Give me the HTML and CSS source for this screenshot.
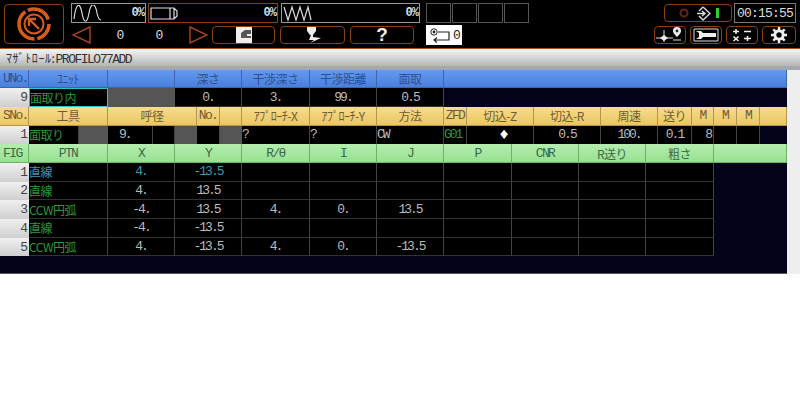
FILE: index.html
```html
<!DOCTYPE html>
<html lang="en">
<head>
    <meta charset="UTF-8">
    <title>PROFILO77ADD</title>
    <link rel="stylesheet" href="styles.css">
</head>
<body>
    <div class="topbar">
        <div class="home-btn">
            <svg width="36" height="36" viewBox="0 0 36 36">
                <circle cx="18" cy="18" r="15" fill="none" stroke="#d85c1c" stroke-width="3.5" stroke-dasharray="20 3 38 3 25 5"/>
                <circle cx="18" cy="18" r="9.5" fill="none" stroke="#d85c1c" stroke-width="2"/>
                <path d="M23 23 L13.5 13.5 M13 20 V13 H20" fill="none" stroke="#d85c1c" stroke-width="2.4"/>
            </svg>
        </div>
        <div class="panels">
            <div class="panel-row">
                <div class="gauge gauge-load">
                    <svg width="30" height="17" viewBox="0 0 30 17"><path d="M1 14 C3 -3 7 -3 9 8 C11 19 14 19 16 8 C18 -3 22 -3 24 8 C25 13 26 15 28 15" fill="none" stroke="#ddd" stroke-width="1.2"/></svg>
                    <span class="pct">0%</span>
                </div>
                <div class="gauge gauge-tool">
                    <svg width="30" height="17" viewBox="0 0 30 17"><path d="M1 3 H20 V14 H1 Z M20 3 H24 L27 6 V11 L24 14 H20 M24 3 V14" fill="none" stroke="#ddd" stroke-width="1.2"/></svg>
                    <span class="pct">0%</span>
                </div>
                <div class="gauge gauge-spring">
                    <svg width="30" height="17" viewBox="0 0 30 17"><path d="M1 2 L5 15 L9 2 L13 15 L17 2 L21 15 L25 2 L28 15" fill="none" stroke="#ddd" stroke-width="1.2"/></svg>
                    <span class="pct">0%</span>
                </div>
                <div class="slots">
                    <div class="slot"></div>
                    <div class="slot"></div>
                    <div class="slot"></div>
                    <div class="slot"></div>
                </div>
                <div class="status-box">
                    <svg width="14" height="14" viewBox="0 0 14 14"><circle cx="7" cy="7" r="3.5" fill="none" stroke="#6a2418" stroke-width="2"/></svg>
                    <svg width="15" height="15" viewBox="0 0 15 15"><path d="M7 1 L14 7.5 L7 14 L3 10 M3 5 L7 1 M1 7.5 H8 M6 5 L9 7.5 L6 10" fill="none" stroke="#ddd" stroke-width="1.4"/></svg>
                    <div class="lamp"></div>
                </div>
                <div class="clock">00:15:55</div>
            </div>
            <div class="panel-row">
                <svg class="arrow" width="19" height="18" viewBox="0 0 19 18"><path d="M18 1 L1 9 L18 17 Z" fill="none" stroke="#a8451c" stroke-width="1.4"/></svg>
                <span class="count">0</span>
                <span class="count">0</span>
                <svg class="arrow" width="19" height="18" viewBox="0 0 19 18"><path d="M1 1 L18 9 L1 17 Z" fill="none" stroke="#a8451c" stroke-width="1.4"/></svg>
                <div class="tool-btn tool-btn-a">
                    <svg width="16" height="16" viewBox="0 0 16 16"><rect width="16" height="16" fill="#eee"/><path d="M5 6 L9 3 H15 V7 H11 V9 H15 V11 H5 Z" fill="#555"/></svg>
                </div>
                <div class="tool-btn tool-btn-b">
                    <svg width="18" height="17" viewBox="0 0 18 17"><path d="M3 0 H12 V4 L9 8 H6 L3 4 Z" fill="#eee"/><path d="M7 8 H9 V10 L17 11 L6 16 L10 13 H5 Z" fill="#eee"/></svg>
                </div>
                <div class="tool-btn tool-btn-c">?</div>
                <div class="cycle-box">
                    <svg width="21" height="15" viewBox="0 0 21 15"><circle cx="5" cy="4" r="3.2" fill="none" stroke="#222"/><circle cx="5" cy="4" r="1.4" fill="#222"/><path d="M9 4 H20 V12 H5 M8 9.5 L5 12 L8 14.5" fill="none" stroke="#222" stroke-width="1.2"/></svg>
                    <span>0</span>
                </div>
                <div class="menu-btns">
                    <div class="menu-btn">
                        <svg width="30" height="16" viewBox="0 0 30 16"><path d="M1 11 H18 M9 3 V15" stroke="#ddd" fill="none"/><path d="M9 8 L13 11 L9 14 L5 11 Z" fill="#eee"/><path d="M22 0 a4 4 0 0 1 4 4 c0 2 -2 4 -4 6 c-2 -2 -4 -4 -4 -6 a4 4 0 0 1 4 -4 Z" fill="#eee"/><circle cx="22" cy="4" r="1.4" fill="#222"/><path d="M18 13 H26" stroke="#ddd"/></svg>
                    </div>
                    <div class="menu-btn menu-btn-wrench">
                        <svg width="26" height="14" viewBox="0 0 26 14"><path d="M1 1 H25 V13 H1 Z" fill="none" stroke="#ddd"/><path d="M3 3 H8 L10 5 H23 V9 H10 L8 11 H3 L6 9 V5 Z" fill="#eee"/></svg>
                    </div>
                    <div class="menu-btn">
                        <svg width="20" height="14" viewBox="0 0 20 14"><path d="M1 3.5 H7 M4 1 V6 M12 3.5 H19 M1.5 8.5 L6.5 13 M6.5 8.5 L1.5 13 M12 10.5 H19 M15.5 8 V13" stroke="#eee" stroke-width="1.6" fill="none"/></svg>
                    </div>
                    <div class="menu-btn">
                        <svg width="16" height="16" viewBox="0 0 16 16"><circle cx="8" cy="8" r="4.2" fill="none" stroke="#eee" stroke-width="3"/><path d="M8 0 V3 M8 13 V16 M0 8 H3 M13 8 H16 M2.3 2.3 L4.4 4.4 M11.6 11.6 L13.7 13.7 M13.7 2.3 L11.6 4.4 M4.4 11.6 L2.3 13.7" stroke="#eee" stroke-width="2.4"/></svg>
                    </div>
                </div>
            </div>
        </div>
    </div>

    <div class="title-bar"><span class="jp">ﾏｻﾞﾄﾛｰﾙ:</span>PROFILO77ADD</div>
    <div class="title-gap"></div>

    <div class="main">
        <div class="sheet">
            <div class="row row-unit head-blue">
                <div class="cell num">UNo.</div>
                <div class="cell jp">ﾕﾆｯﾄ</div>
                <div class="cell"></div>
                <div class="cell jp">深さ</div>
                <div class="cell jp">干渉深さ</div>
                <div class="cell jp">干渉距離</div>
                <div class="cell jp">面取</div>
                <div class="cell"></div>
            </div>
            <div class="row row-unit">
                <div class="cell idx">9</div>
                <div class="cell jp green left selected">面取り内</div>
                <div class="cell off"></div>
                <div class="cell val">0.</div>
                <div class="cell val">3.</div>
                <div class="cell val">99.</div>
                <div class="cell val">0.5</div>
                <div class="cell blank"></div>
            </div>
            <div class="row row-seq head-yellow">
                <div class="cell num">SNo.</div>
                <div class="cell jp">工具</div>
                <div class="cell jp">呼径</div>
                <div class="cell num">No.</div>
                <div class="cell"></div>
                <div class="cell jp">ｱﾌﾟﾛｰﾁ-X</div>
                <div class="cell jp">ｱﾌﾟﾛｰﾁ-Y</div>
                <div class="cell jp">方法</div>
                <div class="cell num">ZFD</div>
                <div class="cell jp">切込-Z</div>
                <div class="cell jp">切込-R</div>
                <div class="cell jp">周速</div>
                <div class="cell jp">送り</div>
                <div class="cell num">M</div>
                <div class="cell num">M</div>
                <div class="cell num">M</div>
                <div class="cell"></div>
            </div>
            <div class="row row-tool">
                <div class="cell idx">1</div>
                <div class="cell jp green left">面取り</div>
                <div class="cell off"></div>
                <div class="cell val left-pad">9.</div>
                <div class="cell"></div>
                <div class="cell off"></div>
                <div class="cell"></div>
                <div class="cell off"></div>
                <div class="cell val left">?</div>
                <div class="cell val left">?</div>
                <div class="cell val left">CW</div>
                <div class="cell val green left">G01</div>
                <div class="cell val diamond">♦</div>
                <div class="cell val">0.5</div>
                <div class="cell val">100.</div>
                <div class="cell val">0.1</div>
                <div class="cell val right">8</div>
                <div class="cell"></div>
                <div class="cell"></div>
                <div class="cell blank"></div>
            </div>
            <div class="row row-fig head-green">
                <div class="cell num">FIG</div>
                <div class="cell num">PTN</div>
                <div class="cell num">X</div>
                <div class="cell num">Y</div>
                <div class="cell num">R/θ</div>
                <div class="cell num">I</div>
                <div class="cell num">J</div>
                <div class="cell num">P</div>
                <div class="cell num">CNR</div>
                <div class="cell jp">R送り</div>
                <div class="cell jp">粗さ</div>
                <div class="cell"></div>
            </div>
            <div class="row row-fig row-data">
                <div class="cell idx">1</div>
                <div class="cell jp cyan left">直線</div>
                <div class="cell val cyan">4.</div>
                <div class="cell val cyan">-13.5</div>
                <div class="cell"></div><div class="cell"></div><div class="cell"></div><div class="cell"></div><div class="cell"></div><div class="cell"></div><div class="cell"></div>
                <div class="cell blank"></div>
            </div>
            <div class="row row-fig row-data">
                <div class="cell idx">2</div>
                <div class="cell jp green left">直線</div>
                <div class="cell val">4.</div>
                <div class="cell val">13.5</div>
                <div class="cell"></div><div class="cell"></div><div class="cell"></div><div class="cell"></div><div class="cell"></div><div class="cell"></div><div class="cell"></div>
                <div class="cell blank"></div>
            </div>
            <div class="row row-fig row-data">
                <div class="cell idx">3</div>
                <div class="cell jp green left">CCW円弧</div>
                <div class="cell val">-4.</div>
                <div class="cell val">13.5</div>
                <div class="cell val">4.</div>
                <div class="cell val">0.</div>
                <div class="cell val">13.5</div>
                <div class="cell"></div><div class="cell"></div><div class="cell"></div><div class="cell"></div>
                <div class="cell blank"></div>
            </div>
            <div class="row row-fig row-data">
                <div class="cell idx">4</div>
                <div class="cell jp green left">直線</div>
                <div class="cell val">-4.</div>
                <div class="cell val">-13.5</div>
                <div class="cell"></div><div class="cell"></div><div class="cell"></div><div class="cell"></div><div class="cell"></div><div class="cell"></div><div class="cell"></div>
                <div class="cell blank"></div>
            </div>
            <div class="row row-fig row-data">
                <div class="cell idx">5</div>
                <div class="cell jp green left">CCW円弧</div>
                <div class="cell val">4.</div>
                <div class="cell val">-13.5</div>
                <div class="cell val">4.</div>
                <div class="cell val">0.</div>
                <div class="cell val">-13.5</div>
                <div class="cell"></div><div class="cell"></div><div class="cell"></div><div class="cell"></div>
                <div class="cell blank"></div>
            </div>
        </div>
        <div class="side-strip"></div>
    </div>
</body>
</html>
```

FILE: styles.css
```css
body {
    margin: 0;
    background: white;
    font-family: "Liberation Mono", "Noto Sans CJK JP", monospace;
    font-size: 13px;
    letter-spacing: -2px;
    color: #bbb;
}
.jp {
    font-family: "Noto Sans CJK JP", sans-serif;
    font-size: 12px;
    letter-spacing: -0.5px;
}

/* top bar */
.topbar {
    display: flex;
    gap: 7px;
    height: 49px;
    box-sizing: border-box;
    padding: 3px 4px 0 4px;
    background: black;
    border-bottom: 1px solid #a8501e;
}
.home-btn {
    width: 60px;
    height: 40px;
    margin-top: 1px;
    box-sizing: border-box;
    border: 1px solid #8a3f1a;
    border-radius: 4px;
    display: flex;
    align-items: center;
    justify-content: center;
}
.panels {
    flex: 1;
    display: flex;
    flex-direction: column;
    gap: 2px;
}
.panel-row {
    display: flex;
    align-items: center;
    height: 20px;
}
.gauge {
    height: 20px;
    box-sizing: border-box;
    border: 1px solid #999;
    display: flex;
    align-items: center;
    justify-content: space-between;
    padding: 0 1px;
    color: #ddd;
    margin-right: 3px;
}
.gauge-load { width: 75px; margin-right: 2px; }
.gauge-tool { width: 130px; border-color: #8a3f1a; }
.gauge-spring { width: 139px; }
.pct {
    font-size: 12px;
    font-weight: bold;
    letter-spacing: -1px;
}
.slots {
    display: flex;
    gap: 1px;
    margin-left: 3px;
}
.slot {
    width: 25px;
    height: 20px;
    box-sizing: border-box;
    border: 1px solid #555;
}
.status-box {
    margin-left: auto;
    width: 68px;
    height: 18px;
    box-sizing: border-box;
    border: 1px solid #8a3f1a;
    border-radius: 4px;
    display: flex;
    align-items: center;
    justify-content: center;
    gap: 5px;
}
.lamp {
    width: 3px;
    height: 10px;
    background: #2fd12f;
}
.clock {
    width: 62px;
    height: 20px;
    margin-left: 2px;
    box-sizing: border-box;
    border: 1px solid #777;
    color: #ddd;
    font-size: 13px;
    letter-spacing: -0.8px;
    display: flex;
    align-items: center;
    justify-content: center;
}
.arrow {
    margin-left: 1px;
}
.count {
    width: 39px;
    text-align: center;
    color: #ddd;
}
.count:first-of-type {
    margin-left: 9px;
}
.count + svg {
    margin-left: 11px;
}
.tool-btn {
    height: 18px;
    box-sizing: border-box;
    border: 1px solid #8a3f1a;
    border-radius: 4px;
    display: flex;
    align-items: center;
    justify-content: center;
    margin-left: 5px;
}
.tool-btn-a { width: 63px; margin-left: 4px; }
.tool-btn-b { width: 65px; }
.tool-btn-c {
    width: 64px;
    color: #eee;
    font-family: "Liberation Sans", sans-serif;
    font-size: 19px;
    font-weight: bold;
    letter-spacing: 0;
}
.cycle-box {
    width: 36px;
    height: 20px;
    margin-left: 12px;
    background: white;
    color: #222;
    display: flex;
    align-items: center;
    justify-content: center;
    gap: 3px;
}
.menu-btns {
    margin-left: auto;
    display: flex;
    gap: 4px;
}
.menu-btn {
    width: 32px;
    height: 18px;
    box-sizing: border-box;
    border: 1px solid #8a3f1a;
    border-radius: 4px;
    display: flex;
    align-items: center;
    justify-content: center;
}
.menu-btn:last-child { width: 34px; }

/* title */
.title-bar {
    height: 17px;
    line-height: 17px;
    padding-left: 6px;
    background: linear-gradient(#f4f4f4, #b4b6ba);
    color: #333;
    letter-spacing: -1.5px;
}
.title-bar .jp {
    letter-spacing: 0.6px;
}
.title-gap {
    height: 3.5px;
    background: #a6a8ac;
}

/* sheet */
.main {
    display: flex;
}
.sheet {
    width: 787px;
    height: 203.5px;
    background: #020218;
    border-bottom: 1px solid #555;
}
.side-strip {
    flex: 1;
    background: #eee;
}
.row {
    display: grid;
    height: 18.7px;
}
.row-unit {
    grid-template-columns: 29px 79px 67px 67px 68px 67px 67px 1fr;
}
.row-seq {
    grid-template-columns: 29px 79px 89px 23px 22px 68px 67px 67px 23px 67px 67px 57px 34px 22px 23px 23px 1fr;
}
.row-tool {
    grid-template-columns: 29px 50px 29px 45px 22px 22px 23px 22px 68px 67px 67px 23px 67px 67px 57px 34px 22px 23px 23px 1fr;
}
.row-fig {
    grid-template-columns: 29px 79px 67px 67px 68px 67px 67px 68px 67px 67px 68px 1fr;
}
.cell {
    box-sizing: border-box;
    min-width: 0;
    overflow: hidden;
    white-space: nowrap;
    display: flex;
    align-items: center;
    justify-content: center;
    background: black;
    border-right: 1px solid #444;
    border-bottom: 1px solid #333;
}
.cell.blank {
    border: 0;
    background: #020218;
}
.row-tool .cell:nth-child(-n+19) {
    border-bottom: 0;
}
.head-blue .cell {
    background: linear-gradient(#6399ee, #4a80dc);
    border-color: #3a66b0;
    color: #2f4f8f;
}
.head-yellow .cell {
    background: linear-gradient(#f6dc8c, #ecc662);
    border-color: #b0964e;
    color: #6e5c30;
}
.head-green .cell {
    background: linear-gradient(#b4eeae, #98e090);
    border-color: #6fb06a;
    color: #3a6a4a;
}
.head-blue .cell:first-child,
.head-yellow .cell:first-child,
.head-green .cell:first-child {
    justify-content: flex-start;
    padding-left: 3px;
}
.head-blue .cell:first-child,
.head-yellow .cell:first-child,
.head-green .cell:first-child,
.head-yellow .num,
.head-green .num {
    letter-spacing: -1.6px;
}
.cell.idx {
    justify-content: flex-end;
    padding-right: 3px;
    background: linear-gradient(#f0f0f0, #cfcfcf);
    color: #444;
    border: 0;
}
.cell.off {
    background: #555;
    border: 0;
}
.cell.left {
    justify-content: flex-start;
}
.cell.left-pad {
    justify-content: flex-start;
    padding-left: 11px;
}
.cell.right {
    justify-content: flex-end;
    padding-right: 2px;
}
.green { color: #2a9a3a; }
.cyan { color: #3a9ab0; }
.selected {
    border: 1px solid #2fc4c4;
}
.diamond {
    color: white;
    font-size: 16px;
    letter-spacing: 0;
    padding-left: 8px;
}
```
